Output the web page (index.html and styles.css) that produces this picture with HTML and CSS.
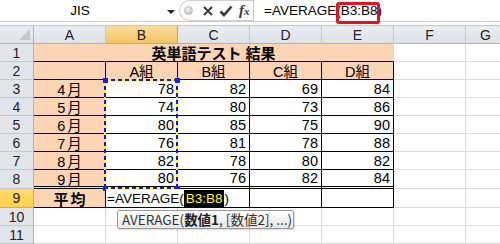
FILE: index.html
```html
<!DOCTYPE html>
<html lang="ja">
<head>
<meta charset="utf-8">
<title>AVERAGE</title>
<link rel="stylesheet" href="styles.css">
</head>
<body>
<div class="fbar">
  <div class="namebox"><span class="nb-text">JIS</span><span class="nb-arrow"></span></div>
  <div class="fx-ctrl">
    <span class="knob"></span>
    <svg class="ico-x" width="10" height="10" viewBox="0 0 10 10"><path d="M1 1L9 9M9 1L1 9" stroke="#3a3a3a" stroke-width="2" fill="none"/></svg>
    <svg class="ico-ok" width="14" height="12" viewBox="0 0 14 12"><path d="M1.5 6.5L5 10L12.5 1.5" stroke="#3a3a3a" stroke-width="2.6" fill="none"/></svg>
    <span class="fx">f<span class="fx-x">x</span></span>
  </div>
  <div class="finput">=AVERAGE(B3:B8)</div>
  <div class="redbox"></div>
</div>
<div class="gap"></div>
<div class="sheet">
  <div class="c hd corner"><span class="tri"></span></div>
  <div class="c hd">A</div><div class="c hd selc">B</div><div class="c hd">C</div><div class="c hd">D</div><div class="c hd">E</div><div class="c hd">F</div><div class="c hd">G</div>

  <div class="c rh">1</div>
  <div class="c pk title">英単語テスト 結果</div>
  <div class="c"></div><div class="c"></div>

  <div class="c rh">2</div>
  <div class="c pk t"></div><div class="c pk t m">A組</div><div class="c pk t m">B組</div><div class="c pk t m">C組</div><div class="c pk t m">D組</div>
  <div class="c"></div><div class="c"></div>

  <div class="c rh">3</div>
  <div class="c pk t m lbl">4月</div><div class="c t r">78</div><div class="c t r">82</div><div class="c t r">69</div><div class="c t r">84</div>
  <div class="c"></div><div class="c"></div>

  <div class="c rh">4</div>
  <div class="c pk t m lbl">5月</div><div class="c t r">74</div><div class="c t r">80</div><div class="c t r">73</div><div class="c t r">86</div>
  <div class="c"></div><div class="c"></div>

  <div class="c rh">5</div>
  <div class="c pk t m lbl">6月</div><div class="c t r">80</div><div class="c t r">85</div><div class="c t r">75</div><div class="c t r">90</div>
  <div class="c"></div><div class="c"></div>

  <div class="c rh">6</div>
  <div class="c pk t m lbl">7月</div><div class="c t r">76</div><div class="c t r">81</div><div class="c t r">78</div><div class="c t r">88</div>
  <div class="c"></div><div class="c"></div>

  <div class="c rh">7</div>
  <div class="c pk t m lbl">8月</div><div class="c t r">82</div><div class="c t r">78</div><div class="c t r">80</div><div class="c t r">82</div>
  <div class="c"></div><div class="c"></div>

  <div class="c rh">8</div>
  <div class="c pk t m lbl dbl">9月</div><div class="c t r dbl">80</div><div class="c t r dbl">76</div><div class="c t r dbl">82</div><div class="c t r dbl">84</div>
  <div class="c"></div><div class="c"></div>

  <div class="c rh selr">9</div>
  <div class="c pk t m b lbl">平均</div><div class="c t"></div><div class="c t"></div><div class="c t"></div><div class="c t"></div>
  <div class="c"></div><div class="c"></div>

  <div class="c rh">10</div>
  <div class="c"></div><div class="c"></div><div class="c"></div><div class="c"></div><div class="c"></div><div class="c"></div><div class="c"></div>

  <div class="c rh">11</div>
  <div class="c"></div><div class="c"></div><div class="c"></div><div class="c"></div><div class="c"></div><div class="c"></div><div class="c"></div>

  <div class="ants"></div>
  <span class="hdl hdl-tl"></span><span class="hdl hdl-tr"></span><span class="hdl hdl-bl"></span><span class="hdl hdl-br"></span>

  <div class="edit">=AVERAGE(<span class="ref">B3:B8</span>)</div>
  <div class="tip">AVERAGE(<b>数値1</b>, [数値2], ...)</div>
</div>
</body>
</html>
```
FILE: styles.css
```css
* { box-sizing: border-box; }
html, body { margin: 0; padding: 0; }
body {
  width: 500px;
  height: 244px;
  overflow: hidden;
  background: #fff;
  font-family: "Liberation Sans", "Noto Sans CJK JP", sans-serif;
  font-size: 14.5px;
  color: #000;
}

/* formula bar */
.fbar {
  position: relative;
  display: flex;
  height: 22px;
  border-bottom: 1px solid #c8cdd3;
  background: #fff;
}
.namebox {
  width: 179px;
  display: flex;
  align-items: center;
  font-size: 13.5px;
}
.nb-text { width: 160px; text-align: center; }
.nb-arrow {
  width: 0; height: 0;
  margin-left: 7px;
  margin-top: 2px;
  border-left: 4px solid transparent;
  border-right: 4px solid transparent;
  border-top: 4px solid #222;
}
.fx-ctrl {
  width: 74px;
  height: 21px;
  display: flex;
  align-items: center;
  border: 1px solid #cfcfcf;
  border-right: none;
  border-radius: 11px 0 0 11px;
  background: #fdfdfd;
}
.knob {
  width: 9px; height: 9px;
  margin-left: 4px;
  border-radius: 50%;
  background: radial-gradient(circle at 40% 35%, #f4f4f4 0, #c9c9c9 70%, #b4b4b4 100%);
  border: 1px solid #bdbdbd;
}
.ico-x { margin-left: 10px; }
.ico-ok { margin-left: 6px; }
.fx {
  margin-left: 6px;
  font-family: "Liberation Serif", serif;
  font-style: italic;
  font-weight: bold;
  font-size: 15px;
  color: #3a3a3a;
}
.fx-x { font-size: 11px; }
.finput {
  flex: 1;
  height: 21px;
  line-height: 21px;
  padding-left: 10px;
  border-left: 1px solid #c6c6c6;
  font-size: 13.5px;
  white-space: nowrap;
}
.redbox {
  position: absolute;
  left: 336px;
  top: 2px;
  width: 44px;
  height: 22px;
  border: 3px solid #e8101c;
  border-radius: 3px;
}
.gap {
  height: 4px;
  border-bottom: 1px solid #c2c8d0;
}

/* sheet grid */
.sheet {
  position: relative;
  display: grid;
  grid-template-columns: 34px repeat(6, 72px) 40px;
  grid-template-rows: 18px repeat(7, 18px) 19px 19px 18px 18px;
}
.c {
  display: flex;
  align-items: center;
  padding: 0 3px;
  white-space: nowrap;
  overflow: hidden;
  background: #fff;
  border-right: 1px solid #dadada;
  border-bottom: 1px solid #dadada;
}
.hd {
  justify-content: center;
  background: linear-gradient(#e9ecf0, #dfe3e8);
  border-right-color: #c3c9d1;
  border-bottom-color: #a9b2bd;
  color: #222;
  font-size: 14px;
}
.corner { position: relative; border-right-color: #a9b2bd; }
.tri {
  position: absolute;
  right: 3px;
  bottom: 3px;
  width: 0; height: 0;
  border-left: 11px solid transparent;
  border-bottom: 11px solid #c2c7ce;
}
.selc {
  background: linear-gradient(#f9dc9c, #f1c463);
  border-right-color: #e0a443;
  border-bottom-color: #f0a030;
}
.rh {
  justify-content: center;
  background: #e1e5ea;
  border-right-color: #a9b2bd;
  border-bottom-color: #c3c9d1;
  color: #222;
  font-size: 14px;
}
.selr {
  background: linear-gradient(#ffdb6a, #ffd24e);
  border-bottom-color: #e5a540;
  border-right-color: #e5a540;
}
.pk { background: #fcd5b4; }
.t { border-right-color: #000; border-bottom-color: #000; }
.title {
  grid-column: span 5;
  justify-content: center;
  font-weight: bold;
  font-size: 15px;
  border-bottom-color: #000;
}
.m { justify-content: center; }
.r { justify-content: flex-end; }
.lbl { letter-spacing: 2px; text-indent: 2px; }
.b { font-weight: bold; font-size: 15px; }
.dbl { border-bottom: 3px double #000; }

/* copy marquee around B3:B8 */
.ants {
  position: absolute;
  left: 104px;
  top: 53px;
  width: 74px;
  height: 110px;
  background:
    repeating-linear-gradient(90deg, #1010ff 0 4px, #ffff00 4px 7px) left top / 100% 2px no-repeat,
    repeating-linear-gradient(90deg, #1010ff 0 4px, #ffff00 4px 7px) left bottom / 100% 2px no-repeat,
    repeating-linear-gradient(180deg, #1010ff 0 4px, #ffff00 4px 7px) left top / 2px 100% no-repeat,
    repeating-linear-gradient(180deg, #1010ff 0 4px, #ffff00 4px 7px) right top / 2px 100% no-repeat;
}
.hdl {
  position: absolute;
  width: 5px;
  height: 5px;
  background: #1a1aff;
}
.hdl-tl { left: 103px; top: 52px; }
.hdl-tr { left: 175px; top: 52px; }
.hdl-bl { left: 103px; top: 160px; }
.hdl-br { left: 175px; top: 160px; }

/* in-cell edit of B9 */
.edit {
  position: absolute;
  left: 106px;
  top: 163px;
  width: 143px;
  height: 18px;
  padding-left: 1px;
  background: #fff;
  display: flex;
  align-items: center;
  font-size: 13.5px;
  white-space: nowrap;
}
.ref {
  background: #000;
  color: #ffff00;
  padding: 0 2px;
  line-height: 17px;
}
.tip {
  position: absolute;
  left: 117px;
  top: 184px;
  width: 177px;
  height: 19px;
  padding-left: 4px;
  border: 1px solid #9a9a9a;
  border-radius: 2px;
  background: linear-gradient(#ffffff, #e6e6e6);
  box-shadow: 1px 1px 1px rgba(0,0,0,0.15);
  font-family: "Noto Sans CJK JP", sans-serif;
  font-size: 13.5px;
  line-height: 17px;
  color: #333;
  white-space: nowrap;
}
.tip b { font-weight: bold; color: #222; }
```
